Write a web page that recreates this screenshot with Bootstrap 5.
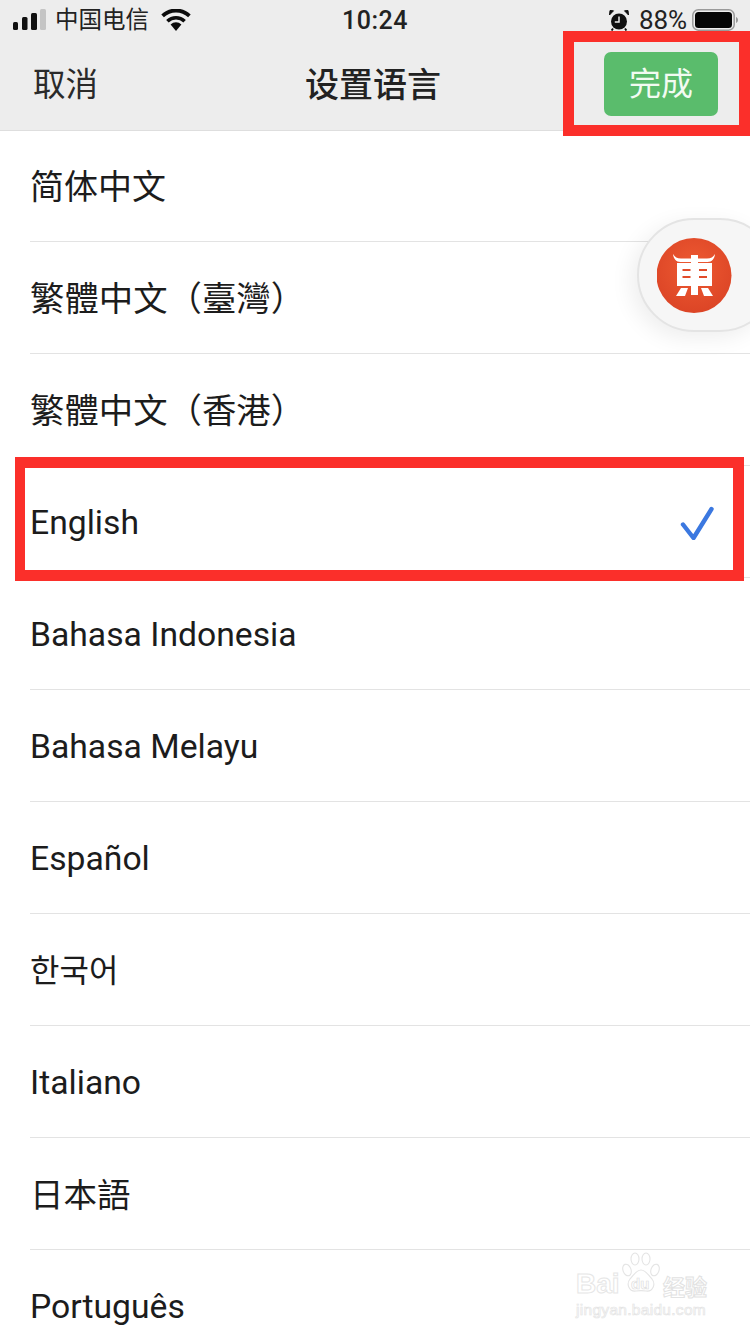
<!DOCTYPE html>
<html lang="zh-CN">
<head>
<meta charset="utf-8">
<title>设置语言</title>
<link href="https://cdn.jsdelivr.net/npm/bootstrap@5.3.0/dist/css/bootstrap.min.css" rel="stylesheet">
<style>
html,body{height:1334px;overflow:hidden;background:#fff}
.phone{width:750px;height:1334px;overflow:hidden;font-family:Roboto,"Noto Sans CJK SC",sans-serif;color:#1c1c1c}
.top-area{background:#ededed;height:131px;border-bottom:1px solid #dedede}
.status-row{height:40px;padding:0 12px 0 13px;color:#222}
.signal{width:33px;height:22px}
.carrier{font-size:23.5px;margin-left:9px;line-height:1}
.wifi{width:30px;height:22px;margin-left:12px}
.clock{left:0;right:0;top:7px;text-align:center;font-size:25px;font-weight:500;line-height:28px;letter-spacing:.5px}
.alarm{width:20px;height:21px}
.batt-text{font-size:26px;margin:0 5px 0 10px;line-height:1;letter-spacing:-.1px}
.batt{width:46px;height:22px}
.nav-row{height:90px;padding:0 32px 0 33px}
.cancel{font-size:32.5px;color:#2a2a2a;line-height:1}
.title-text{left:0;right:4px;top:65px;text-align:center;font-size:34px;font-weight:500;line-height:40px;color:#222}
.done-btn{width:114px;height:64px;background:#5abc6c;border:0;border-radius:7px;color:#f2fbf2;font-size:32px;line-height:1;padding:0;margin-top:-3px}
.lang-list{margin:0;padding:0;list-style:none}
.lang-row{height:112px;margin-left:30px;border-bottom:1px solid #e3e3e3;font-size:34px;line-height:1;color:#1c1c1c}
.lang-row.first{height:111px}
.lang-en{font-weight:400;font-size:33.7px;padding-top:2px}
.tc{font-family:"Noto Sans CJK TC",sans-serif;font-size:34.4px;padding-bottom:2px}
.sc{font-family:"Noto Sans CJK SC",sans-serif;padding-bottom:3px}
.jp{font-family:"Noto Sans CJK JP",sans-serif;font-size:33.5px;padding-bottom:2px}
.kr{font-family:"Noto Sans CJK KR",sans-serif;font-size:32px;padding-bottom:3px}
.check{width:34px;height:34px;margin-right:36px}
.mark-box{border-style:solid;border-color:#fb2f2a;pointer-events:none}
.mark-a{left:563px;top:31px;width:187px;height:105px;border-width:11px}
.mark-b{left:15px;top:457px;width:729px;height:124px;border-width:11px 11px 11px 10px}
.float-pill{left:637px;top:218px;width:140px;height:114px;border-radius:57px;background:#f6f6f6;border:2px solid #e4e4e4;box-shadow:-6px 6px 22px rgba(0,0,0,.07)}
.float-logo{left:657px;top:238px;width:75px;height:75px}
.wm{left:576px;top:1252px;width:134px;height:68px;pointer-events:none}
.wm-main{left:0;top:19px;font-family:"Liberation Sans",sans-serif;font-weight:700;font-size:28px;line-height:26px;color:transparent;-webkit-text-stroke:1px #e6e6e6}
.wm-du{left:55px;top:24px;font-family:"Liberation Sans",sans-serif;font-weight:700;font-size:15px;line-height:16px;color:transparent;-webkit-text-stroke:.7px #e0e0e0}
.wm-cn{left:87px;top:20px;font-family:"Noto Sans CJK SC",sans-serif;font-size:22px;font-weight:700;line-height:26px;color:transparent;-webkit-text-stroke:1px #e2e2e2;white-space:nowrap}
.wm-url{left:0;top:49px;font-family:"Liberation Sans",sans-serif;font-size:15.5px;line-height:18px;letter-spacing:.3px;color:transparent;-webkit-text-stroke:.7px #e4e4e4;white-space:nowrap}
.wm-paw{left:45px;top:0;width:40px;height:46px}
</style>
</head>
<body>
<div class="phone position-relative">
  <div class="top-area">
    <div class="status-row d-flex align-items-center position-relative">
      <svg class="signal" viewBox="0 0 33 22"><rect x="0" y="13" width="5" height="8" rx="1.5" fill="#111"/><rect x="9" y="8" width="5.5" height="13" rx="1.5" fill="#111"/><rect x="18" y="4" width="6" height="17" rx="1.5" fill="#111"/><rect x="27" y="0" width="6" height="21" rx="1.5" fill="#c4c4c4"/></svg>
      <span class="carrier sc">中国电信</span>
      <svg class="wifi" viewBox="0 0 30 22"><path d="M15 22 9.6 15.4a8 8 0 0 1 10.8 0Z" fill="#0c0c0c"/><path d="M6.400 12.200a12.600 12.600 0 0 1 17.200 0" fill="none" stroke="#0c0c0c" stroke-width="3.600"/><path d="M1.600 6.800a19.600 19.600 0 0 1 26.800 0" fill="none" stroke="#0c0c0c" stroke-width="3.800"/></svg>
      <span class="clock position-absolute">10:24</span>
      <span class="ms-auto d-flex align-items-center">
        <svg class="alarm" viewBox="0 0 20 21"><circle cx="10" cy="11.500" r="8" fill="#111"/><path d="M10 6.500V12H5.800" fill="none" stroke="#eee" stroke-width="1.500"/><path d="M.5 5 4.500.8 1 .5ZM19.500 5 15.500.8 19 .5Z" fill="#111" stroke="#111" stroke-width="1"/><path d="M4 18.500 2.600 20.600M16 18.500 17.400 20.600" stroke="#111" stroke-width="1.800"/></svg>
        <span class="batt-text">88%</span>
        <svg class="batt" viewBox="0 0 46 22"><rect x=".8" y=".8" width="41.400" height="20.400" rx="5.500" fill="none" stroke="#9a9a9a" stroke-width="1.500"/><rect x="3" y="3" width="37" height="16" rx="3.500" fill="#050505"/><path d="M44 8c1.400.5 2 1.600 2 3s-.6 2.500-2 3Z" fill="#9a9a9a"/></svg>
      </span>
    </div>
    <div class="title-text position-absolute">设置语言</div>
    <div class="nav-row d-flex align-items-center justify-content-between">
      <span class="cancel">取消</span>
      <button type="button" class="btn done-btn">完成</button>
    </div>
  </div>

  <ul class="lang-list">
    <li class="lang-row first d-flex align-items-center sc">简体中文</li>
    <li class="lang-row d-flex align-items-center tc">繁體中文（臺灣）</li>
    <li class="lang-row d-flex align-items-center tc">繁體中文（香港）</li>
    <li class="lang-row d-flex align-items-center justify-content-between lang-en"><span>English</span>
      <svg class="check" viewBox="0 0 34 34"><path d="M3 18.500 13.500 32 31.500 3" fill="none" stroke="#3b78e0" stroke-width="4.400" stroke-linecap="round" stroke-linejoin="round"/></svg></li>
    <li class="lang-row d-flex align-items-center lang-en">Bahasa Indonesia</li>
    <li class="lang-row d-flex align-items-center lang-en">Bahasa Melayu</li>
    <li class="lang-row d-flex align-items-center lang-en">Español</li>
    <li class="lang-row d-flex align-items-center kr">한국어</li>
    <li class="lang-row d-flex align-items-center lang-en">Italiano</li>
    <li class="lang-row d-flex align-items-center jp">日本語</li>
    <li class="lang-row d-flex align-items-center lang-en">Português</li>
  </ul>

  <div class="float-pill position-absolute"></div>
  <svg class="float-logo position-absolute" viewBox="0 0 75 75" role="img" aria-label="logo">
    <defs><radialGradient id="lg" cx="50%" cy="40%" r="60%"><stop offset="0" stop-color="#ee5a32"/><stop offset="1" stop-color="#dc4526"/></radialGradient></defs>
    <circle cx="37" cy="37.500" r="37.500" fill="url(#lg)"/>
    <g fill="#fff">
      <path d="M16 16c2 3 4 4.500 8 4.500h26c4 0 6-1.500 8-4.500-.5 4.500-3 8-7.500 8h-27C19 24 16.500 20.500 16 16Z"/>
      <rect x="34" y="17" width="7" height="40"/>
      <path d="M20 25h35v23H20Z"/>
      <path d="M24 50h7l-3 8h-9ZM44 50h7l5 8h-9Z"/>
    </g>
    <g fill="#e24c2a">
      <rect x="25.500" y="31" width="8" height="2"/><rect x="25.500" y="38" width="8" height="2"/>
      <rect x="42" y="31" width="8" height="2"/><rect x="42" y="38" width="8" height="2"/>
    </g>
  </svg>

  <div class="mark-box mark-a position-absolute"></div>
  <div class="mark-box mark-b position-absolute"></div>

  <div class="wm position-absolute">
    <svg class="wm-paw position-absolute" viewBox="0 0 40 46" fill="none" stroke="#e4e4e4" stroke-width="1.100">
      <ellipse cx="6" cy="18" rx="4" ry="6" transform="rotate(-20 6 18)"/>
      <ellipse cx="14" cy="7" rx="4" ry="6"/>
      <ellipse cx="25" cy="7" rx="4" ry="6"/>
      <ellipse cx="34" cy="18" rx="4" ry="6" transform="rotate(20 34 18)"/>
      <path d="M20 18c5 0 7 5 11 9 4 5 1 13-6 12-3-.5-7-.5-10 0-7 1-10-7-6-12 4-4 6-9 11-9Z"/>
    </svg>
    <span class="wm-main position-absolute">Bai</span>
    <span class="wm-du position-absolute">du</span>
    <span class="wm-cn position-absolute">经验</span>
    <span class="wm-url position-absolute">jingyan.baidu.com</span>
  </div>
</div>
<script src="https://cdn.jsdelivr.net/npm/bootstrap@5.3.0/dist/js/bootstrap.bundle.min.js"></script>
</body>
</html>
